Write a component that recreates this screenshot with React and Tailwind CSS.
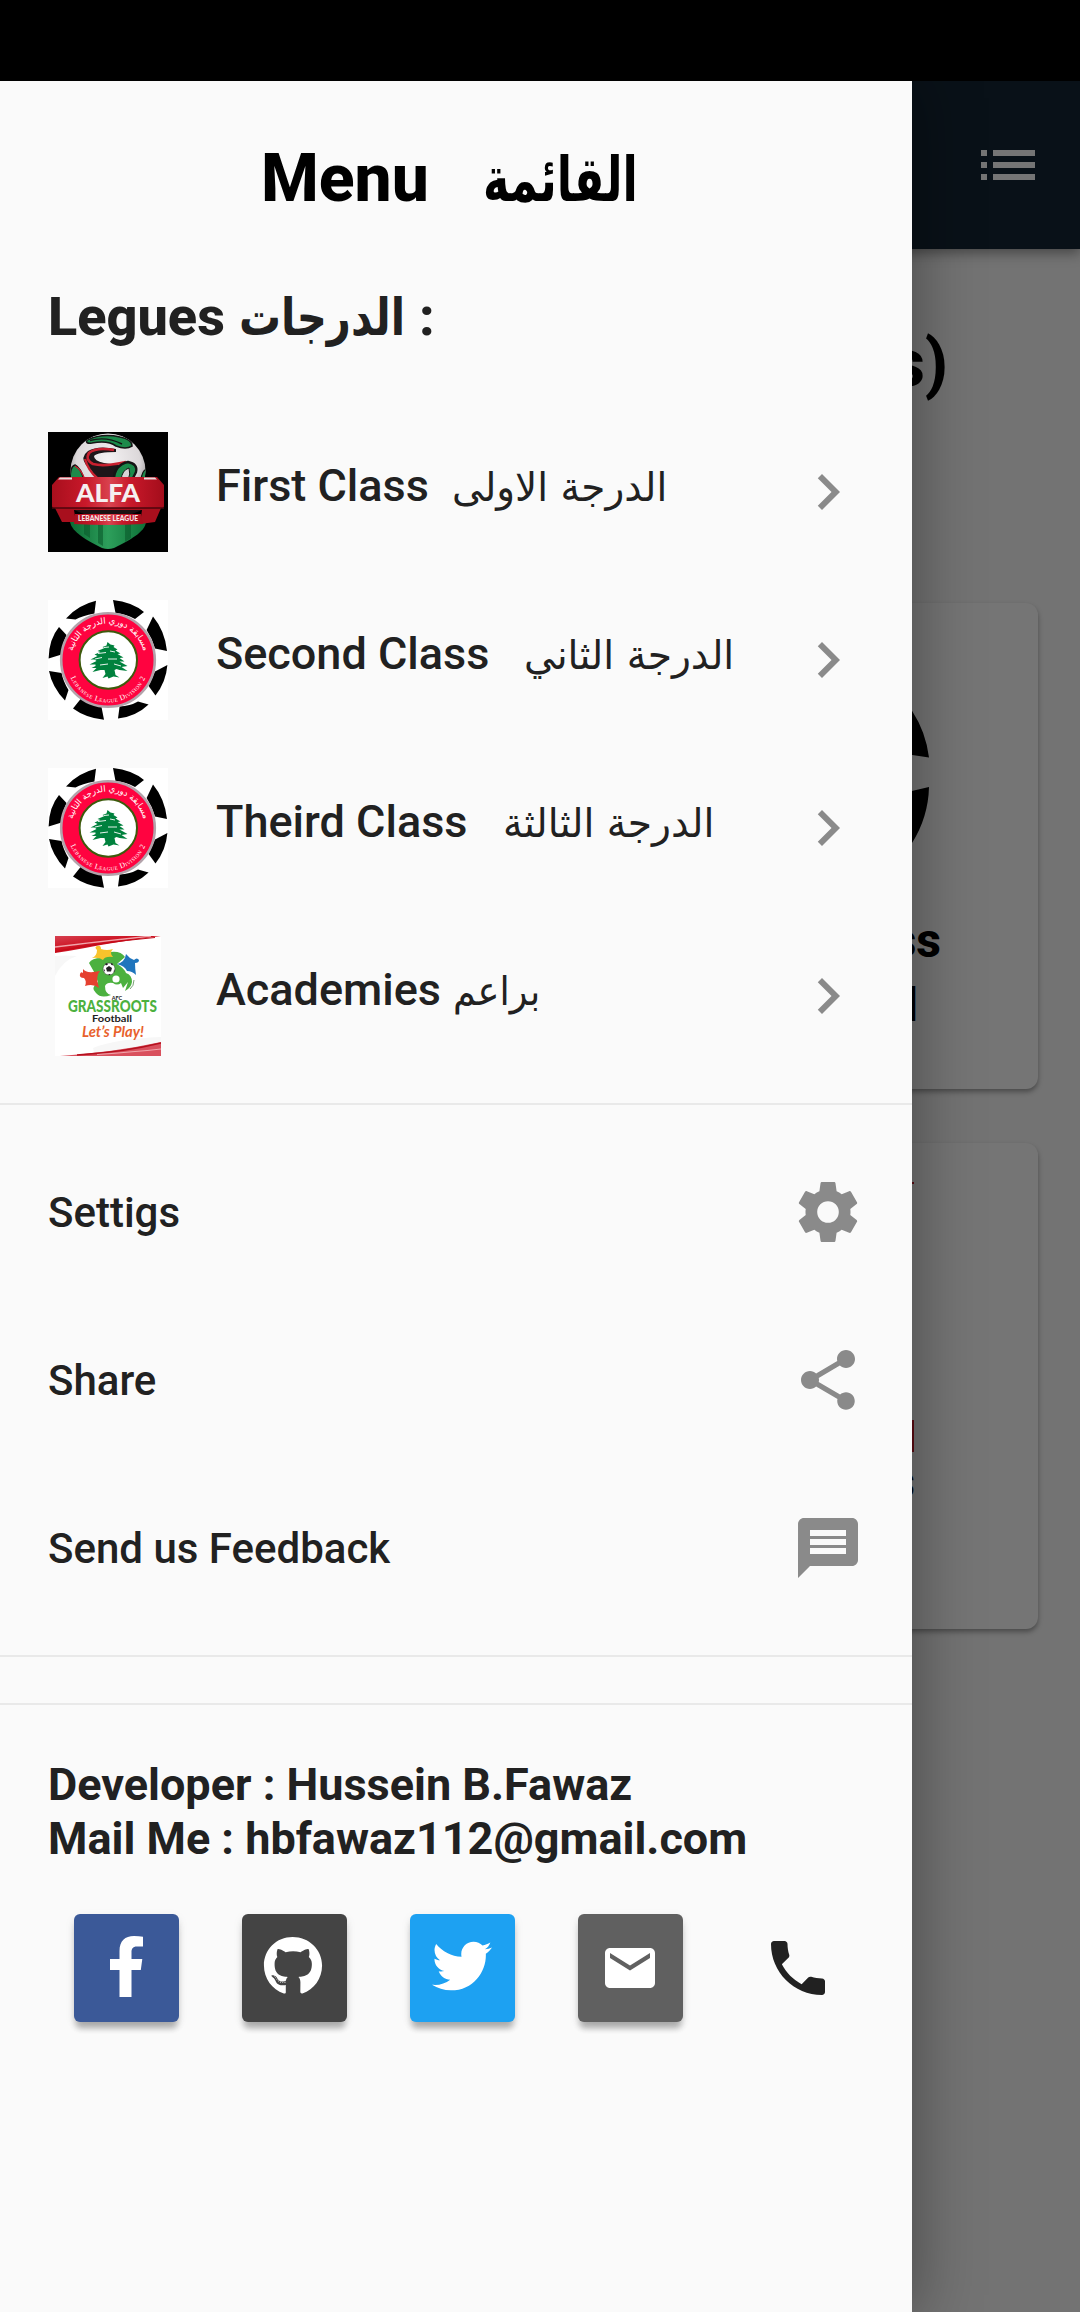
import React from "react";
import { FaGithub, FaTwitter } from "react-icons/fa";
import {
  MdChevronRight,
  MdShare,
  MdMessage,
  MdEmail,
  MdPhone,
  MdList,
} from "react-icons/md";

function AlfaLogo() {
  return (
    <svg viewBox="0 0 120 120" className="block h-[120px] w-[120px]">
      <defs>
        <radialGradient id="ball" cx="0.5" cy="0.35" r="0.6">
          <stop offset="0" stopColor="#f4f2f3" />
          <stop offset="0.7" stopColor="#dcd8da" />
          <stop offset="1" stopColor="#8d8a8c" />
        </radialGradient>
        <linearGradient id="band" x1="0" x2="1">
          <stop offset="0" stopColor="#a80f1d" />
          <stop offset="0.3" stopColor="#c8182a" />
          <stop offset="0.52" stopColor="#d9434f" />
          <stop offset="0.7" stopColor="#c8182a" />
          <stop offset="1" stopColor="#a30d1b" />
        </linearGradient>
        <linearGradient id="grass" x1="0" x2="1">
          <stop offset="0" stopColor="#0b6a33" />
          <stop offset="0.5" stopColor="#2d9f5b" />
          <stop offset="1" stopColor="#0d7037" />
        </linearGradient>
        <clipPath id="ballClip">
          <circle cx="60" cy="39" r="37.5" />
        </clipPath>
      </defs>
      <rect width="120" height="120" fill="#000" />
      <circle cx="60" cy="39" r="37.5" fill="url(#ball)" />
      <g clipPath="url(#ballClip)">
        <path d="M39 8Q37 12 44 11Q60 8 68 14Q78 18 84 14Q84 7 72 5Q54 1 39 8Z" fill="#1c8a4a" stroke="#151515" strokeWidth="1.6" />
        <path d="M42 8.500Q58 4 74 12" fill="none" stroke="#151515" strokeWidth="1.4" />
        <path d="M68 17Q50 13 40 19Q32 25 38 33Q44 38 48 46H84Q80 34 70 33L56 31Q46 29 46 24Q50 20 68 20Z" fill="#1d1619" />
        <path d="M66 18Q48 15 41 21Q37 28 45 32Q56 35 78 30" fill="none" stroke="#c8202f" strokeWidth="2.6" />
        <path d="M37 27Q40 38 49 46" fill="none" stroke="#c8202f" strokeWidth="2.4" />
        <path d="M66 48Q66 33 80 30Q90 32 88 40L84 48Z" fill="#1c8a4a" stroke="#151515" strokeWidth="2.4" />
        <path d="M73 48Q74 38 81 36Q83 42 80 48Z" fill="#d8d4d6" stroke="#151515" strokeWidth="1" />
        <path d="M22 48Q22 34 27 33Q33 36 36 48Z" fill="#1c8a4a" stroke="#151515" strokeWidth="1.6" />
        <path d="M27 34Q34 38 37 48" fill="none" stroke="#c8202f" strokeWidth="1.4" />
        <path d="M93 48Q94 38 99 37V48Z" fill="#1c8a4a" stroke="#151515" strokeWidth="1.2" />
      </g>
      <path d="M22 90H98C97 100 82 108 66 116Q60 118 54 116C38 108 24 100 22 90Z" fill="url(#grass)" />
      <path d="M36 92h6v14l-6-4zM50 92h5v22l-5-3zM77 92h6v14l-6 4z" fill="#0a5a2c" opacity="0.6" />
      <path d="M7 76L14 90H28L26 78H94L92 92L107 90L113 76Z" fill="#a80f1d" />
      <path d="M26 78H94L84 82H36Z" fill="#1d1113" />
      <path d="M27 82H93L95 92Q60 94 26 92Z" fill="url(#band)" />
      <path d="M11 45H109L116 53V74Q116 76 113 76H7Q4 76 4 74V53Z" fill="url(#band)" />
      <path d="M12 45.500h12v2H10zM96 45.500h11l2 2H96z" fill="#e8dcde" />
      <path d="M4 76H116" stroke="#4d060d" strokeWidth="1.5" />
      <text x="60" y="69.500" textAnchor="middle" textLength="64" lengthAdjust="spacingAndGlyphs" fill="#f5eff0" className="font-['Lato'] text-[25px] font-black">
        ALFA
      </text>
      <text x="60" y="89.300" textAnchor="middle" textLength="60" lengthAdjust="spacingAndGlyphs" fill="#f5e6e8" className="font-['Lato'] text-[7px] font-black">
        LEBANESE LEAGUE
      </text>
    </svg>
  );
}

const CHIP_SEGMENTS = [
  "M48 0.8L46.4 13.5Q34 16 27.5 19.6L18 18.5Q30 5 48 0.8Z",
  "M65 0Q84 2 96 12L87 19Q78 14 67.5 13Z",
  "M105 16.5Q117 31 119 51L107 48.5Q104 38 98.6 30Z",
  "M119.4 65Q118 82 107.5 95.5L100.6 86Q104 78 107 71.5Z",
  "M100.6 104.5Q88 116.5 70 118.6L71.6 106.5Q82 106 90 101.4Z",
  "M56 119.8Q38 118 25 108.5L33 98.6Q42 105 53.5 107Z",
  "M17 100.6Q4 87 1 71L13.6 73Q15 81 20.5 90Z",
  "M0.6 58.5Q1 39 11 27L18.5 35Q14 45 13.6 54.5Z",
];

function DivisionLogo({ id }) {
  return (
    <svg viewBox="0 0 120 120" className="block h-[120px] w-[120px]">
      <rect width="120" height="120" fill="#fff" />
      {CHIP_SEGMENTS.map((d) => (
        <path key={d} d={d} fill="#000" />
      ))}
      <circle cx="60" cy="60" r="46.8" fill="#ff0340" stroke="#b3a3ab" strokeWidth="2.6" />
      <circle cx="60.3" cy="60" r="28.7" fill="#fff" stroke="#3d5a0c" strokeWidth="2" />
      <path
        d="M59.5 42l3 2.5 4 1-1 1.5 4 2.500-2 1 5 3-3 .5 6 3.500-4 .5 5 3.500-5 0 8 4.500-6 1 6 4-8-1-3-1-2 1 1 5 4 2.500-6-1-5 2-1-2-5 1.500 3-4-1-4-4 0-8 2 4-4-5 0 4-2 0-1.500-6 0 7-3.500-2-1.500-4 0 7-3.500-3-1.500 6-2.500-3-1 7-3-2-1 4-1.500z"
        fill="#00813d"
      />
      <path d="M50 53.500l8-1M62 51l5 1M47 59l7-1.500M60 59l9 0M52 65l8-1M66 64l7 2M56 47.500l5-.5" stroke="#fff" strokeWidth="0.9" fill="none" />
      <path id={`${id}-top`} d="M23.500 60A36.500 36.500 0 0 1 96.500 60" fill="none" />
      <path id={`${id}-bottom`} d="M19.500 62A40.500 40.500 0 0 0 100.500 62" fill="none" />
      <text fill="#fff" direction="rtl" textAnchor="middle" className="font-['DejaVu_Sans',sans-serif] text-[8.600px]">
        <textPath href={`#${id}-top`} startOffset="50%">
          مسابقة دوري الدرجة الثانية
        </textPath>
      </text>
      <text fill="#fff" textAnchor="middle" className="font-['Liberation_Serif',serif] text-[7.600px] tracking-[0.5px] [font-variant:small-caps]">
        <textPath href={`#${id}-bottom`} startOffset="50%">
          Lebanese League Division 2
        </textPath>
      </text>
    </svg>
  );
}

function GrassrootsLogo() {
  return (
    <svg viewBox="0 0 106 120" className="block h-[120px] w-[106px]">
      <defs>
        <linearGradient id="ribbon" x1="0" x2="1" y1="0" y2="1">
          <stop offset="0" stopColor="#d64050" />
          <stop offset="0.45" stopColor="#cc0d1c" />
          <stop offset="1" stopColor="#e58a93" />
        </linearGradient>
      </defs>
      <rect width="106" height="120" fill="#fff" />
      <path d="M0 20Q10 19 22 20Q8 24 0 40ZM38 112Q60 103 106 101V112L60 120H40Z" fill="#f7f7f7" />
      <path d="M0 0H106Q60 6 30 12Q14 15 0 17Z" fill="url(#ribbon)" />
      <path d="M0 11Q40 6 96 0" stroke="#f0a5ab" strokeWidth="1.3" fill="none" />
      <path d="M0 16Q40 7 100 1.500" stroke="#c20a18" strokeWidth="1" fill="none" />
      <path d="M5 120Q60 116 106 106V120Z" fill="#d9505d" />
      <path d="M22 119Q70 116 106 107" stroke="#b5101e" strokeWidth="1.4" fill="none" />
      <path d="M42 118.500Q80 116 106 113" stroke="#f0a5ab" strokeWidth="1.2" fill="none" />
      <path d="M34 27Q37 22 46 22L56 16Q66 15 70 21L62 28Q69 32 71 37Q77 39 77 46Q76 52 70 55L73 46L68 52L66 47Q62 50 58 47Q52 46 50 50Q50 58 56 59Q46 63 41 57Q35 52 43 46Q40 36 34 27Z" fill="#4cb13f" />
      <path d="M37 22Q42 20 42 14Q39 11 42 10Q46 9 46 13Q52 15 58 13Q54 17 58 21Q50 20 48 24Q44 21 37 22Z" fill="#f8c32c" />
      <path d="M62 28Q70 26 71 18Q74 22 79 24Q82 21 84 24Q84 27 80 27Q80 32 81 39Q77 35 72 35Q70 30 62 28Z" fill="#1f75bd" />
      <path d="M28 33Q31 38 45 35Q40 40 44 52Q38 47 30 50Q32 45 29 42Q24 42 25 38Q26 35 28 37Z" fill="#e5402f" />
      <path d="M79 44Q79 50 75 53" fill="none" stroke="#5a8a55" strokeWidth="0.8" />
      <circle cx="54" cy="33" r="6" fill="#fff" stroke="#333" strokeWidth="0.5" />
      <path d="M54 30l3 2-1 3.500h-4l-1-3.500zM50 28l2-1 1 1.500-2 1zM56 27l2 1-.5 1.500-1.500-1zM48.500 33l1.500 1v2zM59.500 33l-1 2.500 1 .5zM53 38h2.500l-1 1.200z" fill="#222" />
      <circle cx="61" cy="43" r="3.600" fill="#fff" />
      <text x="62" y="63.500" textAnchor="middle" fill="#222" className="font-['Lato'] text-[5.500px] font-bold">AFC</text>
      <text x="57.500" y="75.500" textAnchor="middle" textLength="89" lengthAdjust="spacingAndGlyphs" fill="#4cb13f" className="font-['Lato'] text-[16px] font-black">GRASSROOTS</text>
      <text x="57" y="86.200" textAnchor="middle" textLength="40" lengthAdjust="spacingAndGlyphs" fill="#222" className="font-['Lato'] text-[9px] font-bold">Football</text>
      <text x="58" y="100.500" textAnchor="middle" textLength="62" lengthAdjust="spacingAndGlyphs" fill="#e8612c" className="font-['Lato'] text-[15px] font-bold italic">Let’s Play!</text>
    </svg>
  );
}

function SettingsIcon({ className }) {
  return (
    <svg viewBox="0 0 24 24" fill="currentColor" className={className}>
      <path d="M19.430 12.980c.04-.32.07-.64.07-.98s-.03-.66-.07-.98l2.110-1.650c.19-.15.24-.42.12-.64l-2-3.460c-.12-.22-.39-.3-.61-.22l-2.490 1c-.52-.4-1.080-.73-1.690-.98l-.38-2.650C14.460 2.180 14.250 2 14 2h-4c-.25 0-.46.18-.49.42l-.38 2.650c-.61.25-1.170.59-1.690.98l-2.490-1c-.23-.09-.49 0-.61.22l-2 3.460c-.13.22-.07.49.12.64l2.110 1.650c-.04.32-.07.65-.07.98s.03.66.07.98l-2.110 1.650c-.19.15-.24.42-.12.64l2 3.460c.12.22.39.3.61.22l2.490-1c.52.4 1.080.73 1.690.98l.38 2.650c.03.24.24.42.49.42h4c.25 0 .46-.18.49-.42l.38-2.650c.61-.25 1.170-.59 1.690-.98l2.490 1c.23.09.49 0 .61-.22l2-3.460c.12-.22.07-.49-.12-.64l-2.110-1.650zM12 15.600a3.600 3.600 0 1 1 0-7.200 3.600 3.600 0 0 1 0 7.200z" />
    </svg>
  );
}

function Arabic({ children, className }) {
  return (
    <span dir="rtl" className={`inline-block origin-left whitespace-nowrap leading-none font-['DejaVu_Sans',sans-serif] ${className}`}>
      {children}
    </span>
  );
}

const LEAGUES = [
  { name: "First Class", arabic: "الدرجة الاولى", fit: "ml-[23px] scale-x-[0.973]", logo: <AlfaLogo /> },
  { name: "Second Class", arabic: "الدرجة الثاني", fit: "ml-[35px] scale-x-[0.98]", logo: <DivisionLogo id="second" /> },
  { name: "Theird Class", arabic: "الدرجة الثالثة", fit: "ml-[36px] scale-x-[0.98]", logo: <DivisionLogo id="third" /> },
  { name: "Academies", arabic: "براعم", fit: "ml-[12px] scale-x-[0.92]", logo: <GrassrootsLogo /> },
];

const ACTIONS = [
  { name: "Settigs", Icon: SettingsIcon },
  { name: "Share", Icon: MdShare },
  { name: "Send us Feedback", Icon: MdMessage },
];

function Divider() {
  return (
    <div className="flex h-12 items-center">
      <div className="h-[2px] w-full bg-[#e9e9e9]" />
    </div>
  );
}

function SocialTile({ className, children }) {
  return (
    <div className="flex w-[168px] justify-center">
      <div className={`flex h-[108px] w-[105px] items-center justify-center rounded-md text-white shadow-[0_9px_6px_-3px_rgba(0,0,0,0.2),0_6px_6px_0_rgba(0,0,0,0.12),0_3px_12px_0_rgba(0,0,0,0.06)] ${className}`}>
        {children}
      </div>
    </div>
  );
}

function Drawer() {
  return (
    <aside className="absolute left-0 top-[81px] h-[2231px] w-[912px] bg-[#fafafa] text-[#212121] shadow-[0_0_60px_4px_rgba(0,0,0,0.36)]">
      <h1 className="flex h-[194px] items-baseline pl-[261px] text-[66px] font-extrabold leading-[195px] text-black">
        Menu
        <Arabic className="ml-[54px] scale-x-[0.72] text-[62px] font-bold">القائمة</Arabic>
      </h1>
      <h2 className="flex h-[133px] items-baseline pl-12 text-[54px] font-extrabold leading-[83px]">
        Legues
        <span className="ml-[14px] w-[168px]">
          <Arabic className="scale-x-[0.82] text-[51px] font-bold">الدرجات</Arabic>
        </span>
        <span className="ml-[12px]">:</span>
      </h2>
      <ul>
        {LEAGUES.map(({ name, arabic, fit, logo }) => (
          <li key={name} className="flex h-[168px] items-center px-12">
            <div className="flex w-[120px] justify-center">{logo}</div>
            <div className="ml-12 flex h-[60px] grow items-baseline text-[45px] font-medium leading-[48px]">
              {name}
              <Arabic className={`text-[40px] font-normal ${fit}`}>{arabic}</Arabic>
            </div>
            <MdChevronRight className="size-[72px] text-[#8a8a8a]" />
          </li>
        ))}
      </ul>
      <Divider />
      <ul>
        {ACTIONS.map(({ name, Icon }) => (
          <li key={name} className="flex h-[168px] items-center justify-between px-12 text-[42px] font-medium">
            {name}
            <Icon className="size-[72px] text-[#8a8a8a]" />
          </li>
        ))}
      </ul>
      <Divider />
      <Divider />
      <div className="pl-12 pt-[30px] text-[45px] font-bold leading-[54px]">
        <p>Developer : Hussein B.Fawaz</p>
        <p>Mail Me : hbfawaz112@gmail.com</p>
      </div>
      <div className="mt-[48px] flex items-center pl-[42px]">
        <SocialTile className="bg-[#3b5998]">
          <svg viewBox="0 0 33 61" className="mb-[3px] h-[61px] w-[33px]" fill="currentColor">
            <path d="M9.500 61V34H0V23H9.500V15C9.500 5 15 0 24 0Q29 0 33 .7V10.500H27C22.500 10.500 21.500 13 21.500 16V23H32.300L30.800 34H21.500V61Z" />
          </svg>
        </SocialTile>
        <SocialTile className="bg-[#444444]">
          <FaGithub className="mb-1 mr-[2px] size-[60px]" />
        </SocialTile>
        <SocialTile className="bg-[#1da1f2]">
          <FaTwitter className="mb-1 size-[60px]" />
        </SocialTile>
        <SocialTile className="bg-[#606060]">
          <MdEmail className="size-[60px]" />
        </SocialTile>
        <div className="flex w-[168px] justify-center">
          <MdPhone className="size-[72px]" />
        </div>
      </div>
    </aside>
  );
}

function PageBehind() {
  return (
    <main className="h-[2231px] bg-[#737373] text-black">
      <header className="flex h-[168px] items-center justify-end bg-[#091118] pr-9 shadow-[0_4px_12px_rgba(0,0,0,0.4)]">
        <MdList className="size-[72px] text-[#757575]" />
      </header>
      <div className="flex h-[354px] justify-end pr-[132px] pt-[75px] text-[66px] font-extrabold leading-[80px]">(Classes)</div>
      <section className="ml-[558px] flex h-[486px] w-[480px] flex-col items-end rounded-xl bg-[#757575] shadow-[0_3px_5px_rgba(0,0,0,0.35)]">
        <svg viewBox="0 0 60 140" className="mr-[109px] mt-[104px] h-[140px] w-[60px]">
          <path d="M30 -15L43 3.700A110 110 0 0 1 60 50.500L30 46ZM60 80L30 87V150L43 136A110 110 0 0 0 60 80Z" fill="#000" />
        </svg>
        <div className="mr-[97px] mt-[64px] text-[48px] font-extrabold leading-[60px]">Second Class</div>
        <Arabic className="mr-[119px] mt-[11px] text-[46px] font-bold">الدرجة الثانية</Arabic>
      </section>
      <section className="ml-[558px] mt-[54px] flex h-[486px] w-[480px] flex-col items-end rounded-xl bg-[#757575] shadow-[0_3px_5px_rgba(0,0,0,0.35)]">
        <div className="mr-[124px] mt-[39px] h-[270px] w-[240px] border-b-[32px] border-t-2 border-[#5d0a12]" />
        <div className="mr-[123px] text-[48px] font-extrabold leading-[60px]">Academies</div>
      </section>
    </main>
  );
}

export default function App() {
  return (
    <div className="relative h-[2312px] w-[1080px] overflow-hidden bg-[#737373] font-['Roboto',sans-serif]">
      <div className="h-[81px]" />
      <PageBehind />
      <Drawer />
      <div className="absolute left-0 top-0 h-[81px] w-full bg-black" />
    </div>
  );
}
